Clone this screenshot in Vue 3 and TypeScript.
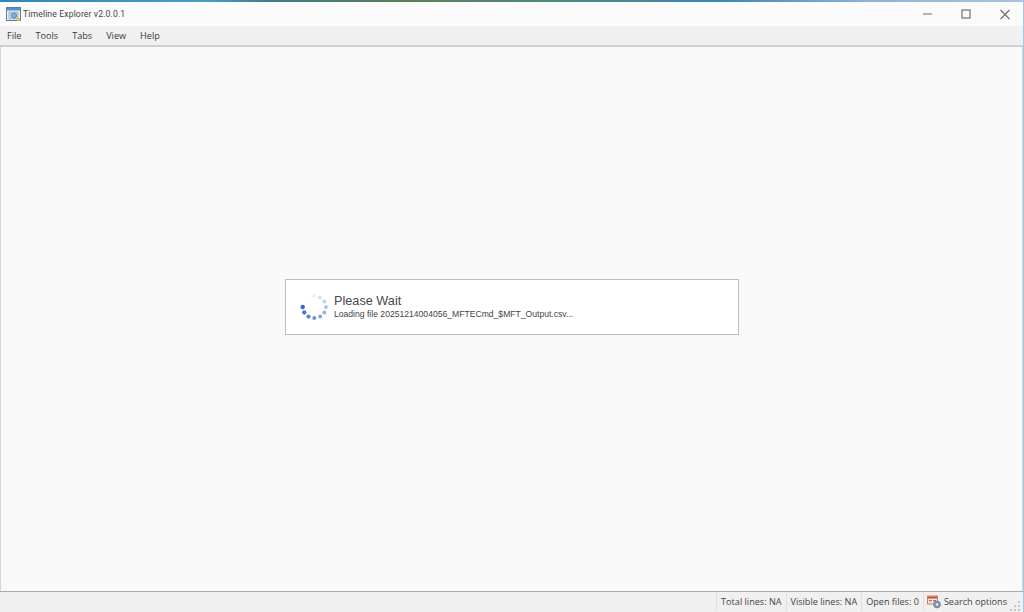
<script setup lang="ts">
const menus: string[] = ['File', 'Tools', 'Tabs', 'View', 'Help']

const dots = Array.from({ length: 12 }, (_, i) => {
  const angle = Math.PI + (i * Math.PI) / 6
  return {
    cx: 18.3 + 11.6 * Math.cos(angle),
    cy: 16 - 11 * Math.sin(angle),
    r: i < 5 ? 2.2 - i * 0.05 : 2,
    opacity: Math.max(0.02, 1 - i * 0.1),
  }
})
</script>

<template>
  <div class="desktop">
    <div class="window">
      <header class="titlebar">
        <svg class="app-icon" width="16" height="16" viewBox="0 0 16 16">
          <rect x="0.5" y="1.5" width="14" height="13" fill="#e8f0f6" stroke="#5b7f9c" />
          <rect x="1" y="2" width="13" height="2.5" fill="#4f93c9" />
          <rect x="3" y="6" width="9" height="7" fill="#c9d6e0" stroke="#8b9aa8" stroke-width="0.6" />
          <circle cx="8" cy="9.5" r="2.6" fill="#7db2e0" stroke="#56789a" stroke-width="0.8" />
          <circle cx="12.5" cy="13.5" r="1.7" fill="#e8b93e" />
        </svg>
        <span class="title">Timeline Explorer v2.0.0.1</span>
        <div class="controls">
          <svg class="ctl" width="46" height="20" viewBox="0 0 46 20">
            <line x1="22" y1="12" x2="31" y2="12" stroke="#888" stroke-width="1.2" />
          </svg>
          <svg class="ctl" width="38" height="20" viewBox="0 0 38 20">
            <rect x="15" y="8" width="8" height="8" fill="none" stroke="#707070" stroke-width="1.2" />
          </svg>
          <svg class="ctl" width="38" height="20" viewBox="0 0 38 20">
            <path d="M15.5 8 L24.5 17 M24.5 8 L15.5 17" fill="none" stroke="#707070" stroke-width="1.2" />
          </svg>
        </div>
      </header>

      <nav class="menubar">
        <span v-for="m in menus" :key="m" class="menu-item">{{ m }}</span>
      </nav>

      <main class="content"></main>

      <footer class="statusbar">
        <span class="cell">Total lines: NA</span>
        <span class="cell">Visible lines: NA</span>
        <span class="cell">Open files: 0</span>
        <span class="cell search">
          <svg width="14" height="14" viewBox="0 0 14 14">
            <rect x="0.5" y="1" width="10" height="8" fill="#f4e4dc" stroke="#c9664a" stroke-width="0.8" />
            <rect x="1" y="1.5" width="9" height="2" fill="#d24a2e" />
            <rect x="2" y="5" width="3" height="1.2" fill="#d9702f" />
            <rect x="6" y="5" width="3" height="1.2" fill="#4e86c6" />
            <circle cx="10" cy="9.5" r="3.4" fill="#8d9aa8" stroke="#6c7886" stroke-width="0.8" />
            <circle cx="10" cy="9.5" r="1.2" fill="#e8edf2" />
          </svg>
          Search options
        </span>
        <svg class="grip" width="14" height="14" viewBox="0 0 14 14">
          <g fill="#c8c8c8">
            <rect x="9" y="4" width="2" height="2" />
            <rect x="5" y="8" width="2" height="2" />
            <rect x="9" y="8" width="2" height="2" />
            <rect x="1" y="12" width="2" height="2" />
            <rect x="5" y="12" width="2" height="2" />
            <rect x="9" y="12" width="2" height="2" />
          </g>
        </svg>
      </footer>

      <div class="overlay">
        <div class="dialog">
          <svg class="spinner" width="36" height="32" viewBox="0 0 36 32">
            <circle
              v-for="(d, i) in dots"
              :key="i"
              :cx="d.cx"
              :cy="d.cy"
              :r="d.r"
              fill="#3068c8"
              :opacity="d.opacity"
            />
          </svg>
          <div class="texts">
            <div class="wait">Please Wait</div>
            <div class="loading">Loading file 20251214004056_MFTECmd_$MFT_Output.csv...</div>
          </div>
        </div>
      </div>
    </div>
  </div>
</template>

<style>
html, body { margin: 0; padding: 0; }
</style>

<style scoped>
.desktop {
  width: 1024px;
  height: 612px;
  overflow: hidden;
  display: flex;
  flex-direction: column;
  padding-top: 2px;
  box-sizing: border-box;
  padding-right: 1px;
  background: linear-gradient(90deg, #2f86b8 0%, #4a9ccb 20%, #3f7f8a 26%, #5a7f5a 40%, #4f8a80 55%, #3a86b5 70%, #8fb3d6 85%, #a9c4e2 100%);
  font-family: "Liberation Sans", Arial, sans-serif;
}
.window {
  position: relative;
  flex: 1;
  display: flex;
  flex-direction: column;
  min-height: 0;
  background: #f9f9f9;
}
.titlebar {
  height: 24px;
  display: flex;
  align-items: center;
  background: #fbfbfb;
  padding-left: 6px;
  box-sizing: border-box;
  flex: none;
}
.app-icon { margin-right: 1px; margin-bottom: 1px; }
.title {
  font-family: Roboto, "Open Sans", sans-serif;
  font-size: 8.7px;
  letter-spacing: 0.1px;
  color: #444;
  margin-bottom: 1px;
}
.controls {
  margin-left: auto;
  display: flex;
  align-items: flex-start;
  align-self: flex-start;
}
.ctl { display: block; }
.menubar {
  height: 19px;
  flex: none;
  display: flex;
  align-items: center;
  gap: 14px;
  padding-left: 7px;
  background: #f0f0f0;
  border-bottom: 2px solid #cfcfcf;
  font-family: "Open Sans", "Noto Sans", sans-serif;
  font-size: 9.15px;
  color: #3a3a3a;
}
.content {
  flex: 1;
  border-left: 1px solid #d6d6d6;
  border-right: 1px solid #d6d6d6;
  background: #f9f9f9;
}
.statusbar {
  height: 21px;
  flex: none;
  display: flex;
  align-items: center;
  justify-content: flex-end;
  background: #f0f0f0;
  border-top: 1px solid #a9a9a9;
  font-family: "Open Sans", "Noto Sans", sans-serif;
  font-size: 9.1px;
  color: #444;
  box-sizing: border-box;
  padding-bottom: 1px;
}
.cell {
  display: flex;
  align-items: center;
  gap: 3px;
  height: 100%;
  padding: 0 4px;
  border-left: 1px solid #e0e0e0;
  white-space: nowrap;
}
.search { padding-left: 3px; padding-right: 2px; }
.grip { flex: none; margin-top: 5px; }
.overlay {
  position: absolute;
  inset: -2px 0 0 0;
  display: flex;
  align-items: center;
  justify-content: center;
  pointer-events: none;
}
.dialog {
  width: 454px;
  height: 56px;
  box-sizing: border-box;
  margin-left: 1px;
  margin-top: 2px;
  display: flex;
  align-items: center;
  background: #fff;
  border: 1px solid #bdbdbd;
  padding-left: 10px;
}
.spinner { flex: none; margin-right: 2px; }
.texts { display: flex; flex-direction: column; margin-bottom: 2px; }
.wait {
  font-size: 12.7px;
  line-height: 16px;
  color: #4a4a4a;
}
.loading {
  font-size: 8.6px;
  line-height: 11px;
  color: #444;
  white-space: nowrap;
}
</style>
